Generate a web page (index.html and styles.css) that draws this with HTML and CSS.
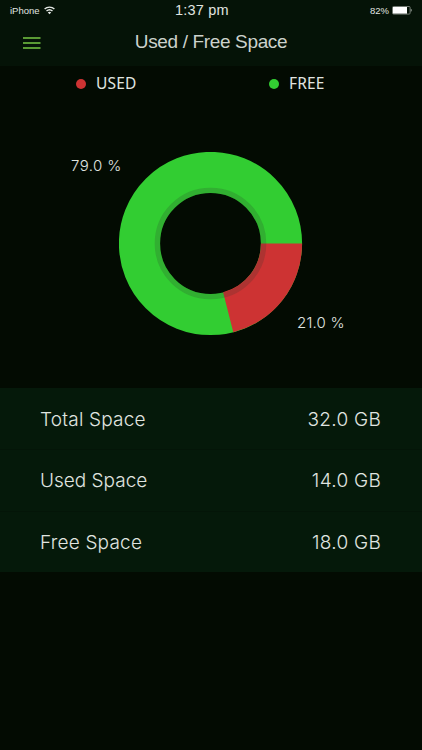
FILE: index.html
```html
<!DOCTYPE html>
<html lang="en">
<head>
<meta charset="utf-8">
<title>Used / Free Space</title>
<link rel="stylesheet" href="styles.css">
</head>
<body>
<header class="top">
  <div class="status">
    <div class="carrier"><span>iPhone</span>
      <svg class="wifi" width="11" height="9" viewBox="0 0 11 9" fill="none" stroke="#e6eae6" stroke-width="1.35"><path d="M.6 3.1C3.3.5 7.7.5 10.4 3.1M2.5 5.1c1.7-1.6 4.3-1.6 6 0"/><path d="M3.8 6.5c1-.9 2.4-.9 3.4 0L5.5 8.2z" fill="#e6eae6" stroke="none"/></svg>
    </div>
    <div class="time">1:37 pm</div>
    <div class="power"><span>82%</span>
      <svg class="battery" width="20" height="9" viewBox="0 0 20 9"><rect x=".5" y=".5" width="17.6" height="7.6" rx="1" fill="none" stroke="#8d948d" stroke-width=".8"/><rect x="1" y="1" width="14" height="6.6" fill="#fff"/><path d="M18.8 2.8c1.1.5 1.1 2.5 0 3z" fill="#c5cac5"/></svg>
    </div>
  </div>
  <div class="nav">
    <svg class="menu" width="18" height="14" viewBox="0 0 18 14" stroke="#5a9a34" stroke-width="1.8"><path d="M0 2h17.5M0 7h17.5M0 12h17.5"/></svg>
    <h1>Used / Free Space</h1>
  </div>
</header>
<main>
  <section class="summary">
    <div class="legend">
      <div class="key used"><i></i><span>USED</span></div>
      <div class="key free"><i></i><span>FREE</span></div>
    </div>
    <div class="chart">
      <span class="percent left">79.0 %</span>
      <svg width="184" height="184" viewBox="-91.5 -91.5 184 184">
        <circle r="71" fill="none" stroke="#32cd32" stroke-width="41.2"/>
        <path d="M50.4 0H91.6A91.6 91.6 0 0 1 22.8 88.8L12.6 48.8A50.4 50.4 0 0 0 50.4 0Z" fill="#cd3333"/>
        <circle r="53.1" fill="none" stroke="#2b352b" stroke-opacity=".2" stroke-width="5.4"/>
      </svg>
      <span class="percent right">21.0 %</span>
    </div>
  </section>
  <dl class="rows">
    <div class="row"><dt class="total">Total Space</dt><dd>32.0 GB</dd></div>
    <div class="row"><dt>Used Space</dt><dd>14.0 GB</dd></div>
    <div class="row"><dt class="available">Free Space</dt><dd>18.0 GB</dd></div>
  </dl>
</main>
</body>
</html>
```
FILE: styles.css
```css
* { box-sizing: border-box; }
body { margin: 0; min-height: 750px; background: #030b02; color: #e0e5e0; font-family: Inter, sans-serif; }
.top { height: 66px; background: #051307; font-family: "Liberation Sans", sans-serif; }
.status { display: grid; grid-template-columns: 165px auto 1fr; height: 20px; align-items: center; padding: 0 10px; }
.carrier, .power { display: flex; align-items: center; font-size: 9.5px; }
.carrier { gap: 4px; }
.power { justify-content: flex-end; gap: 3px; }
.wifi, .battery { display: block; }
.time { font-size: 14.5px; line-height: 20px; letter-spacing: .2px; }
.nav { display: grid; grid-template-columns: 94px 1fr 94px; height: 46px; }
.menu { margin: 16px 0 0 23px; }
h1 { margin: 10px 0 0; text-align: center; font-size: 19px; line-height: 24px; font-weight: 400; letter-spacing: -.35px; color: #ccd2cc; white-space: nowrap; }
.summary { height: 322px; padding-top: 7px; }
.legend { display: grid; grid-template-columns: 193px 1fr; padding-left: 76px; height: 23px; }
.key { display: flex; align-items: center; gap: 10px; height: 22px; font: 15.5px/20px "Noto Sans", sans-serif; letter-spacing: .15px; }
.key span { margin-top: -2px; }
.key i { width: 10px; height: 10px; border-radius: 50%; }
.used i { background: #cd3333; }
.free i { background: #32cd32; }
.chart { display: grid; grid-template-columns: 119px 184px 1fr; margin-top: 56px; height: 184px; }
.percent { font-size: 15px; line-height: 20px; font-weight: 350; white-space: nowrap; letter-spacing: .4px; }
.left { margin: 4px 0 0 71px; }
.right { margin: 161px 0 0 -6px; letter-spacing: .2px; }
.rows { margin: 0; background: #05190a; }
.row { display: flex; height: 61.33px; align-items: center; justify-content: space-between; padding: 1px 41px 0 40px; font-size: 19px; font-weight: 350; }
.row + .row { border-top: 1px solid #041508; }
dt, dd { margin: 0; }
.total { letter-spacing: .2px; }
.available { letter-spacing: .2px; }
dd { letter-spacing: .3px; margin-right: -.2px; }
```
